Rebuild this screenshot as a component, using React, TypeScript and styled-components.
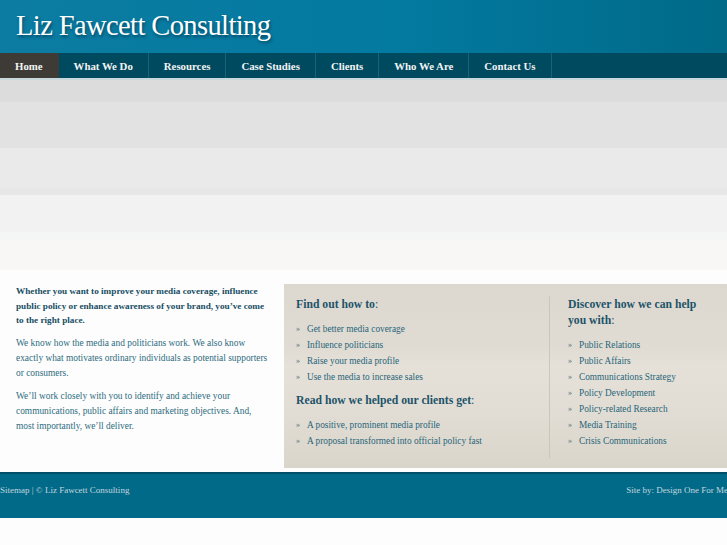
import React from "react";
import styled, { createGlobalStyle } from "styled-components";

const GlobalStyle = createGlobalStyle`
  html, body {
    margin: 0;
    padding: 0;
    background: #fdfdfd;
  }
  body {
    font-family: "Liberation Serif", "Times New Roman", serif;
  }
`;

const Page = styled.div`
  width: 727px;
  overflow: hidden;
`;

const Header = styled.header`
  height: 53px;
  background: linear-gradient(90deg, #0c7ca2 0%, #037aa0 55%, #006a88 100%);
  display: flex;
  align-items: center;
  padding-left: 16px;
`;

const Title = styled.h1`
  margin: 0;
  font-family: "Liberation Serif", "Times New Roman", serif;
  font-weight: normal;
  font-size: 28.5px;
  letter-spacing: -0.6px;
  color: #ffffff;
  text-shadow: 1px 2px 3px rgba(0, 40, 60, 0.6);
  transform: translateY(-1px);
`;

const Nav = styled.nav`
  height: 25px;
  display: flex;
  background: #004a60;
  border-bottom: 2px solid #c9d8dc;
`;

const NavItem = styled.a<{ $active?: boolean }>`
  display: flex;
  align-items: center;
  padding: 0 15px;
  font-size: 10.8px;
  font-weight: bold;
  color: #f2f4f4;
  text-decoration: none;
  background: ${(p) => (p.$active ? "#3e3b37" : "transparent")};
  border-right: 1px solid ${(p) => (p.$active ? "#3e3b37" : "#1b6277")};
`;

const Banner = styled.div`
  height: 190px;
  background: linear-gradient(
    180deg,
    #dcdcdc 0px,
    #dcdcdc 22px,
    #e2e2e2 22px,
    #e2e2e2 68px,
    #eaeaea 68px,
    #eaeaea 108px,
    #e7e7e7 108px,
    #e7e7e7 115px,
    #f2f2f2 115px,
    #f2f2f2 152px,
    #f3f6f5 152px,
    #f3f6f5 160px,
    #f8f7f5 160px,
    #f8f7f5 190px
  );
`;

const Content = styled.section`
  display: flex;
  padding-bottom: 4px;
  background: #fdfdfd;
`;

const Intro = styled.div`
  width: 254px;
  flex-shrink: 0;
  padding: 14px 14px 0 16px;
  font-size: 9.4px;
  line-height: 15px;
  color: #2d6c80;
`;

const Lead = styled.p`
  margin: 0 0 8px;
  font-size: 9.2px;
  font-weight: bold;
  color: #184d63;
  line-height: 14.5px;
`;

const Para = styled.p`
  margin: 0 0 8px;
`;

const Box = styled.div`
  margin-top: 14px;
  flex: 1;
  height: 184px;
  display: flex;
  background: linear-gradient(
    180deg,
    #ddd8cf 0%,
    #e0dcd3 35%,
    #e5e1d9 45%,
    #e1ddd4 70%,
    #dad5cb 100%
  );
`;

const BoxColumn = styled.div<{ $divided?: boolean }>`
  padding: ${(p) => (p.$divided ? "1px 12px 0 18px" : "13px 12px 0")};
  margin: ${(p) => (p.$divided ? "12px 0 10px" : "0")};
  width: ${(p) => (p.$divided ? "140px" : "241px")};
  border-left: ${(p) => (p.$divided ? "1px solid #cbc6bb" : "none")};
`;

const Heading = styled.h3`
  margin: 0 0 8px;
  font-size: 11.7px;
  line-height: 16px;
  font-weight: bold;
  color: #1d5369;

  span {
    font-weight: normal;
  }
`;

const List = styled.ul`
  list-style: none;
  margin: 0 0 8px;
  padding: 0;
`;

const Item = styled.li`
  display: flex;
  font-size: 9.3px;
  line-height: 16px;
  color: #27657a;

  &::before {
    content: "»";
    width: 11px;
    flex-shrink: 0;
    font-size: 8px;
    color: #4f6c76;
  }
`;

const Footer = styled.footer`
  height: 46px;
  box-sizing: border-box;
  background: #006a88;
  border-top: 2px solid #00506a;
  display: flex;
  justify-content: space-between;
  align-items: flex-start;
  padding-top: 11px;
  font-size: 9px;
  line-height: 11px;
  color: #c3d6de;
`;

const FooterRight = styled.span`
  margin-right: -1px;
`;

const navItems = [
  "Home",
  "What We Do",
  "Resources",
  "Case Studies",
  "Clients",
  "Who We Are",
  "Contact Us",
];

const findOut = [
  "Get better media coverage",
  "Influence politicians",
  "Raise your media profile",
  "Use the media to increase sales",
];

const clientsGet = [
  "A positive, prominent media profile",
  "A proposal transformed into official policy fast",
];

const services = [
  "Public Relations",
  "Public Affairs",
  "Communications Strategy",
  "Policy Development",
  "Policy-related Research",
  "Media Training",
  "Crisis Communications",
];

export default function App() {
  return (
    <Page>
      <GlobalStyle />
      <Header>
        <Title>Liz Fawcett Consulting</Title>
      </Header>
      <Nav>
        {navItems.map((name, i) => (
          <NavItem key={name} $active={i === 0} href="#">
            {name}
          </NavItem>
        ))}
      </Nav>
      <Banner />
      <Content>
        <Intro>
          <Lead>
            Whether you want to improve your media coverage, influence public
            policy or enhance awareness of your brand, you’ve come to the right
            place.
          </Lead>
          <Para>
            We know how the media and politicians work. We also know exactly
            what motivates ordinary individuals as potential supporters or
            consumers.
          </Para>
          <Para>
            We’ll work closely with you to identify and achieve your
            communications, public affairs and marketing objectives. And, most
            importantly, we’ll deliver.
          </Para>
        </Intro>
        <Box>
          <BoxColumn>
            <Heading>
              Find out how to<span>:</span>
            </Heading>
            <List>
              {findOut.map((t) => (
                <Item key={t}>{t}</Item>
              ))}
            </List>
            <Heading>
              Read how we helped our clients get<span>:</span>
            </Heading>
            <List>
              {clientsGet.map((t) => (
                <Item key={t}>{t}</Item>
              ))}
            </List>
          </BoxColumn>
          <BoxColumn $divided>
            <Heading>
              Discover how we can help you with<span>:</span>
            </Heading>
            <List>
              {services.map((t) => (
                <Item key={t}>{t}</Item>
              ))}
            </List>
          </BoxColumn>
        </Box>
      </Content>
      <Footer>
        <span>Sitemap | © Liz Fawcett Consulting</span>
        <FooterRight>Site by: Design One For Me</FooterRight>
      </Footer>
    </Page>
  );
}
